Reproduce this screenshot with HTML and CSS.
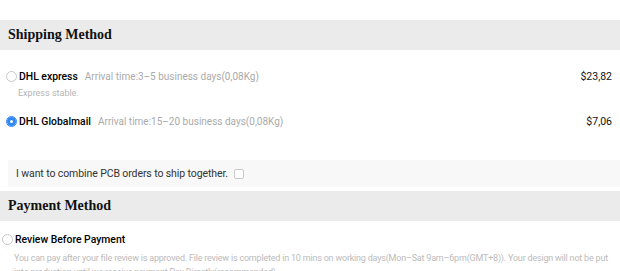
FILE: index.html
```html
<!DOCTYPE html>
<html>
<head>
<meta charset="utf-8">
<link rel="stylesheet" href="styles.css">
</head>
<body>
<div class="page">
  <h2 class="section-head">Shipping Method</h2>
  <div class="ship-list">
    <div class="option">
      <span class="radio"></span>
      <span class="opt-name">DHL express</span>
      <span class="opt-note">Arrival time:3–5 business days(0,08Kg)</span>
      <span class="price">$23,82</span>
    </div>
    <div class="opt-desc">Express stable.</div>
    <div class="option option-second">
      <span class="radio radio-on"></span>
      <span class="opt-name">DHL Globalmail</span>
      <span class="opt-note">Arrival time:15–20 business days(0,08Kg)</span>
      <span class="price">$7,06</span>
    </div>
  </div>
  <div class="combine">
    <span>I want to combine PCB orders to ship together.</span>
    <span class="checkbox"></span>
  </div>
  <h2 class="section-head section-pay">Payment Method</h2>
  <div class="pay">
    <div class="pay-option">
      <span class="radio"></span>
      <span class="pay-name">Review Before Payment</span>
    </div>
    <p class="pay-desc">You can pay after your file review is approved. File review is completed in 10 mins on working days(Mon–Sat 9am–6pm(GMT+8)). Your design will not be put into production until we receive payment.Pay Directly(recommended)</p>
  </div>
</div>
</body>
</html>
```
FILE: styles.css
```css
html, body {
  margin: 0;
  padding: 0;
  background: #fff;
}
body {
  font-family: Roboto, "Liberation Sans", Arial, sans-serif;
  color: #222;
  overflow: hidden;
}
.page {
  width: 620px;
  padding-top: 20px;
}
.section-head {
  margin: 0;
  height: 30px;
  line-height: 30px;
  background: #ebebeb;
  padding-left: 8px;
  font-family: "Liberation Serif", "Times New Roman", serif;
  font-weight: bold;
  font-size: 14px;
  color: #111;
}
.ship-list {
  padding: 19px 8px 0 6px;
}
.option {
  display: flex;
  align-items: center;
  height: 14px;
  font-size: 10px;
}
.radio {
  width: 9px;
  height: 9px;
  border: 1px solid #c8c8c8;
  border-radius: 50%;
  box-sizing: content-box;
  margin-right: 2px;
  flex: none;
}
.radio-on {
  border-color: #2f86f0;
  background: #fff;
  box-shadow: inset 0 0 0 3px #2f86f0;
}
.opt-name {
  font-size: 10.4px;
  font-weight: 500;
  color: #000;
  margin-right: 7px;
}
.opt-note {
  color: #aaa;
  flex: 1;
}
.price {
  font-size: 10.5px;
  color: #111;
}
.opt-desc {
  font-size: 9px;
  color: #b5b5b5;
  padding-left: 12px;
  margin-top: 5px;
  height: 12px;
}
.option-second {
  margin-top: 14px;
}
.combine {
  margin: 32px 0 0 8px;
  height: 27px;
  background: #f8f8f8;
  display: flex;
  align-items: center;
  padding-left: 8px;
  font-size: 10.5px;
  letter-spacing: -0.1px;
  color: #333;
}
.checkbox {
  width: 8px;
  height: 8px;
  border: 1px solid #c8c8c8;
  border-radius: 2px;
  margin-left: 6px;
  background: #fff;
}
.section-pay {
  margin-top: 4px;
}
.pay {
  padding: 11px 0 0 2px;
}
.pay-option {
  display: flex;
  align-items: center;
  height: 14px;
}
.pay-name {
  font-size: 10.4px;
  color: #000;
  font-weight: 500;
}
.pay-desc {
  margin: 5px 0 0 12px;
  font-size: 9px;
  letter-spacing: -0.2px;
  line-height: 14px;
  color: #bbb;
}
```
